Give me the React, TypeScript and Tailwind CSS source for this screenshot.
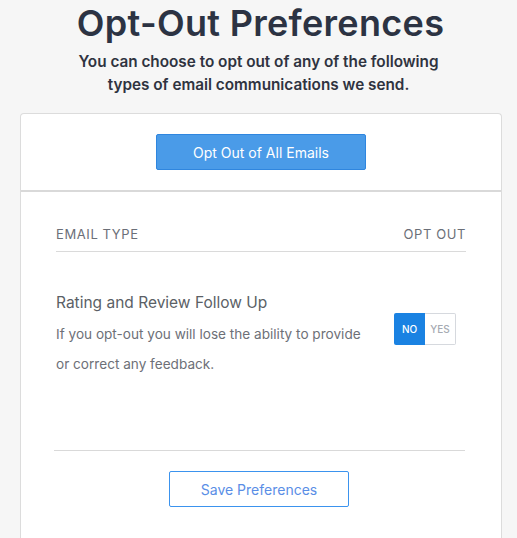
export default function App() {
  return (
    <div className="min-h-[538px] bg-[#f6f6f6] font-['Inter',sans-serif] overflow-hidden">
      <div className="flex flex-col items-center pt-[1px]">
        <h1 className="text-[36px] leading-[44px] font-semibold text-[#2c3343] tracking-[0.3px] pl-[4px]">
          Opt-Out Preferences
        </h1>
        <p className="mt-[5px] w-[370px] text-center text-[15.3px] leading-[23px] font-semibold text-[#2f3340]">
          You can choose to opt out of any of the following types of email communications we send.
        </p>
      </div>

      <div className="ml-[20px] mt-[17px] w-[482px] h-[440px] bg-white border border-[#dcdcdc] border-b-0 rounded-t-[4px]">
        <div className="flex justify-center pt-[20px] pb-[20px] border-b-2 border-[#d9d9d9]">
          <button className="w-[210px] h-[36px] bg-[#4a9be8] border border-[#2f86df] rounded-[2px] text-white text-[14px]">
            Opt Out of All Emails
          </button>
        </div>

        <div className="px-[35px]">
          <div className="mt-[34px] flex justify-between border-b border-[#dadada] pb-[9px] text-[13px] leading-[16px] tracking-[0.6px] text-[#6b6f78]">
            <span>EMAIL TYPE</span>
            <span>OPT OUT</span>
          </div>

          <div className="mt-[41px] flex items-start justify-between">
            <div className="w-[305px]">
              <div className="text-[15.5px] leading-[20px] text-[#5b5f66]">Rating and Review Follow Up</div>
              <p className="mt-[6px] text-[13.6px] leading-[30px] text-[#6d7077]">
                If you opt-out you will lose the ability to provide or correct any feedback.
              </p>
            </div>
            <div className="mt-[20px] mr-[10px] flex h-[32px] text-[10px] font-medium">
              <span className="w-[31px] flex items-center justify-center bg-[#1a82e2] text-white rounded-l-[2px]">NO</span>
              <span className="w-[31px] flex items-center justify-center border border-l-0 border-[#d6d9de] text-[#a6aab2] rounded-r-[2px]">YES</span>
            </div>
          </div>

          <div className="mt-[71px] ml-[-2px] w-[411px] border-t border-[#d9d9d9]" />

          <div className="flex justify-center pr-[4px] mt-[20px]">
            <button className="w-[180px] h-[36px] border border-[#3b93ee] rounded-[2px] text-[14px] text-[#5a8ee6]">
              Save Preferences
            </button>
          </div>
        </div>
      </div>
    </div>
  );
}
